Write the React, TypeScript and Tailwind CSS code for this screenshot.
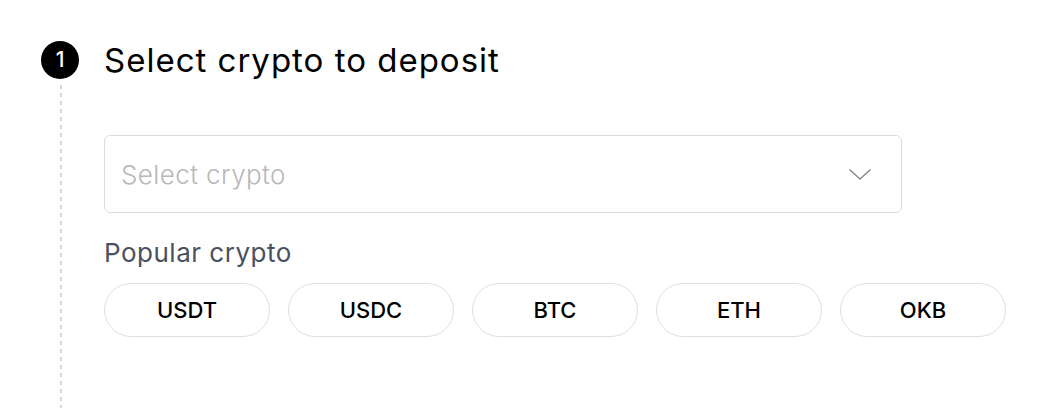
import React from 'react'

const popular = ['USDT', 'USDC', 'BTC', 'ETH', 'OKB']

const Chevron = () => (
    <svg width="24" height="24" viewBox="0 0 24 24" fill="none">
        <path
            d="M2 8l10 9 10-9"
            stroke="#8a8a8a"
            strokeWidth="1.6"
            strokeLinecap="round"
            strokeLinejoin="round"
        />
    </svg>
)

export default function App() {
    return (
        <div className="w-[1046px] h-[408px] overflow-hidden bg-white font-['Inter',sans-serif]">
            <div className="flex flex-col h-full pl-[41px] pt-[41px]">
                {/* step header */}
                <div className="flex items-center gap-[25px]">
                    <div className="w-[38px] h-[38px] rounded-full bg-black text-white flex items-center justify-center text-[21px] font-medium">
                        1
                    </div>
                    <h2 className="text-[33px] leading-[38px] font-normal text-black tracking-[1px]">
                        Select crypto to deposit
                    </h2>
                </div>

                <div className="flex flex-1">
                    <div className="w-[38px] flex justify-center pl-[2px] pt-[6px]">
                        <div className="w-[2px] h-full bg-[linear-gradient(to_bottom,#d6d6d6_50%,transparent_50%)] bg-[length:2px_8px] bg-repeat-y" />
                    </div>

                    <div className="ml-[25px] pt-[56px]">
                        <div className="w-[798px] h-[78px] border border-[#dcdcdc] rounded-md flex items-center justify-between pl-4 pr-[29px]">
                            <span className="text-[26px] font-light tracking-[0.4px] text-[#b8b8b8]">
                                Select crypto
                            </span>
                            <Chevron />
                        </div>

                        <div className="mt-6 text-[26px] leading-8 tracking-[0.5px] text-[#4a5160]">
                            Popular crypto
                        </div>

                        <div className="flex gap-[18px] mt-[14px]">
                            {popular.map((c) => (
                                <button
                                    key={c}
                                    className="w-[166px] h-[54px] rounded-full border-[1.5px] border-[#dedede] flex items-center justify-center text-[22px] font-medium text-black"
                                >
                                    {c}
                                </button>
                            ))}
                        </div>
                    </div>
                </div>
            </div>
        </div>
    )
}
